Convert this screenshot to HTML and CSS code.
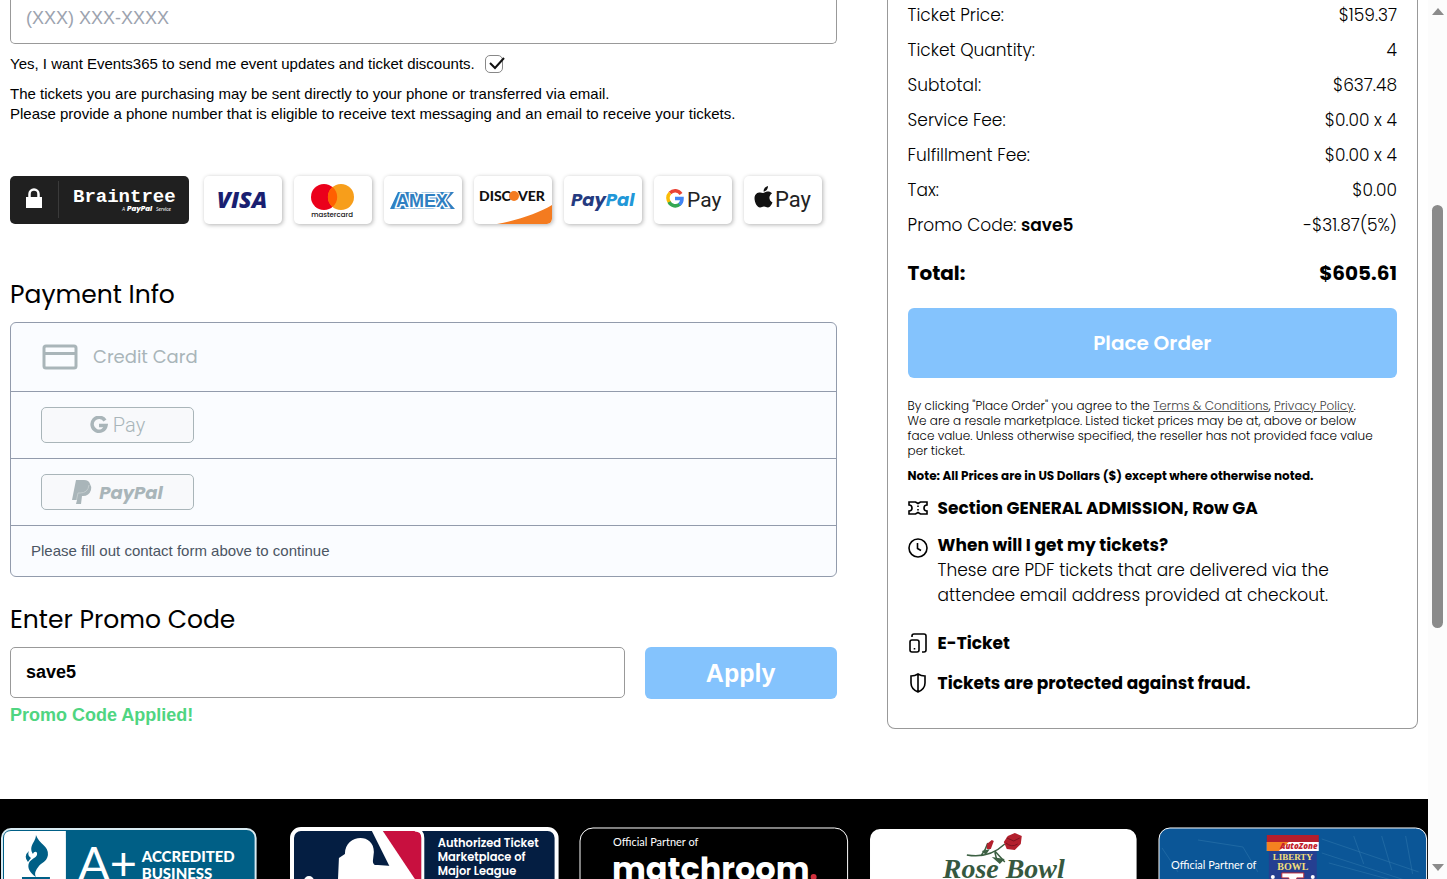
FILE: index.html
```html
<!DOCTYPE html>
<html lang="en">
  <head>
    <meta charset="utf-8">
    <meta name="viewport" content="width=device-width, initial-scale=1">
    <title>Checkout</title>
    <link rel="stylesheet" href="styles.css">
  </head>
  <body>
    <div class="page">
      <main class="checkout">
        <section class="details">
          <input class="input phone" type="tel" placeholder="(XXX) XXX-XXXX" aria-label="Phone number">
          <label class="optin">
            Yes, I want Events365 to send me event updates and ticket discounts.
            <span class="tick">
              <input type="checkbox" checked>
              <svg width="20" height="20" viewBox="0 0 20 20"><path d="M4 8l5 5 9-10" fill="none" stroke="#111" stroke-width="2"/></svg>
            </span>
          </label>
          <p class="notice">The tickets you are purchasing may be sent directly to your phone or transferred via email.<br>
          Please provide a phone number that is eligible to receive text messaging and an email to receive your tickets.</p>

          <div class="brands">
            <svg class="braintree" viewBox="0 0 179 48">
              <rect width="179" height="48" rx="5" fill="#202020"/>
              <rect x="16" y="21" width="16" height="11" fill="#fff"/>
              <path d="M19.5 22v-4a4.5 4.5 0 0 1 9 0v4" fill="none" stroke="#fff" stroke-width="2.5"/>
              <path d="M48.5 5v37" stroke="#3a3a3a"/>
              <text x="63" y="26" class="slab" font-size="19">Braintree</text>
              <text x="112" y="35" class="tiny" font-size="5">A</text>
              <text x="117" y="35" class="tiny bold" font-size="7">PayPal</text>
              <text x="146" y="35" class="tiny" font-size="5">Service</text>
            </svg>
            <svg class="brand" viewBox="0 0 78 48"><text x="38" y="32" text-anchor="middle" class="visa" font-size="23">VISA</text></svg>
            <svg class="brand" viewBox="0 0 78 48">
              <circle cx="30" cy="21" r="13" fill="#eb001b"/>
              <circle cx="47" cy="21" r="13" fill="#f79e1b"/>
              <path d="M38.5 11a13 13 0 0 1 0 20a13 13 0 0 1 0-20z" fill="#ff5f00"/>
              <text x="38" y="41" text-anchor="middle" class="mc" font-size="7">mastercard</text>
            </svg>
            <svg class="brand" viewBox="0 0 78 48">
              <path d="M6 33l8-17h18l3 3 3-3h32l-7 8 8 9H57l-3-3-3 3z" fill="#2f80c2"/>
              <text x="38" y="31" text-anchor="middle" class="amex" font-size="18">AMEX</text>
            </svg>
            <svg class="brand" viewBox="0 0 78 48">
              <path d="M23 48C45 44 65 37 78 29v14q0 5-5 5z" fill="#f47b20"/>
              <text x="5" y="25" class="disc" font-size="14">DISC</text>
              <text x="44" y="25" class="disc" font-size="14">VER</text>
              <circle cx="40" cy="20" r="5" fill="#f47b20"/>
            </svg>
            <svg class="brand" viewBox="0 0 78 48"><text x="7" y="30" class="pp" font-size="18"><tspan fill="#253b80">Pay</tspan><tspan fill="#2197d8">Pal</tspan></text></svg>
            <svg class="brand" viewBox="0 0 78 48">
              <g fill="none" stroke-width="3.5">
                <path d="M27 18a7 7 0 0 0-11-1" stroke="#ea4335"/>
                <path d="M16 17a7 7 0 0 0 0 10" stroke="#fbbc05"/>
                <path d="M15 26a7 7 0 0 0 11 2" stroke="#34a853"/>
                <path d="M25.5 28.5q2.5-2 2.5-6h-7" stroke="#4285f4"/>
              </g>
              <text x="33" y="31" class="pay" font-size="21">Pay</text>
            </svg>
            <svg class="brand" viewBox="0 0 78 48">
              <path d="M19 17c-3-1-8-1-8.500 5 0 5 3 9.500 5.500 9.500 2 0 2-1 4-1s2 1 4 1 3.500-3 4.500-5c-4-2-4-7-.5-9-2-3-6-2-7-1.300-.7.500-1.500.8-2 .8z" fill="#111"/>
              <path d="M19.500 15.500c0-3 2-5 4.500-5.500 0 3-2 5.500-4.500 5.500z" fill="#111"/>
              <text x="31" y="31" class="pay" font-size="22">Pay</text>
            </svg>
          </div>

          <h2>Payment Info</h2>
          <div class="methods">
            <div class="method first">
              <button class="credit" type="button" disabled>
                <svg width="36" height="26" viewBox="0 0 36 26"><g fill="none" stroke="#a9b5b9" stroke-width="3"><rect x="2" y="2" width="32" height="22" rx="2"/><path d="M2 9.500h32"/></g></svg>
                Credit Card
              </button>
            </div>
            <div class="method">
              <button class="wallet" type="button" disabled>
                <svg width="18" height="18" viewBox="0 0 18 18"><path d="M15 4.500A7 7 0 1 0 16 9.500H9" fill="none" stroke="#a9b5b9" stroke-width="3.500"/></svg>
                <span class="gpay">Pay</span>
              </button>
            </div>
            <div class="method">
              <button class="wallet wide" type="button" disabled>
                <svg width="20" height="26" viewBox="0 0 20 26"><path d="M4 1h8q5 0 6 4 2 3 1 6-2 6-8 6h-1l-1 8H4l1-4H0z" fill="#a9b5b9"/><path d="M17 6q-1 8-9 8H6l-1.500 7" fill="none" stroke="#c3ccce"/></svg>
                <span class="paypal">PayPal</span>
              </button>
            </div>
            <p class="fill">Please fill out contact form above to continue</p>
          </div>

          <h2><label for="promo">Enter Promo Code</label></h2>
          <div class="promo">
            <input class="input code" id="promo" type="text" value="save5">
            <button class="apply" type="button">Apply</button>
          </div>
          <p class="applied">Promo Code Applied!</p>
        </section>

        <aside class="summary">
          <dl class="prices">
            <div><dt>Ticket Price:</dt><dd>$159.37</dd></div>
            <div><dt>Ticket Quantity:</dt><dd>4</dd></div>
            <div><dt>Subtotal:</dt><dd>$637.48</dd></div>
            <div><dt>Service Fee:</dt><dd>$0.00 x 4</dd></div>
            <div><dt>Fulfillment Fee:</dt><dd>$0.00 x 4</dd></div>
            <div><dt>Tax:</dt><dd>$0.00</dd></div>
            <div><dt>Promo Code: <b>save5</b></dt><dd>-$31.87(5%)</dd></div>
            <div class="total"><dt>Total:</dt><dd>$605.61</dd></div>
          </dl>
          <button class="order" type="button">Place Order</button>
          <p class="terms">By clicking "Place Order" you agree to the <a href="#">Terms &amp; Conditions</a>, <a href="#">Privacy Policy</a>.<br>
          We are a resale marketplace. Listed ticket prices may be at, above or below<br>
          face value. Unless otherwise specified, the reseller has not provided face value<br>
          per ticket.</p>
          <p class="note">Note: All Prices are in US Dollars ($) except where otherwise noted.</p>
          <ul class="info">
            <li>
              <svg viewBox="0 0 20 20"><path d="M1 4h6.500L10 5.500 12.500 4H19v3q-3 0-3 3t3 3v3h-6.500L10 14.500 7.500 16H1v-3q3 0 3-3T1 7zM10 7.500v1.500M10 11v1.500"/></svg>
              <b>Section GENERAL ADMISSION, Row GA</b>
            </li>
            <li class="when">
              <svg viewBox="0 0 20 20"><circle cx="10" cy="10" r="9"/><path d="M9.500 5v5.500l3.500 2"/></svg>
              <div>
                <b>When will I get my tickets?</b>
                <p>These are PDF tickets that are delivered via the<br>attendee email address provided at checkout.</p>
              </div>
            </li>
            <li class="eticket">
              <svg viewBox="0 0 20 20"><rect x="2" y="7" width="9" height="12" rx="2"/><path d="M4 4V3q0-2 2-2h10q2 0 2 2v14q0 2-2 2h-2M6.500 15v1.500"/></svg>
              <b>E-Ticket</b>
            </li>
            <li class="fraud">
              <svg viewBox="0 0 20 20"><path d="M10 1q3 2 7 2v7q0 6-7 9-7-3-7-9V3q4 0 7-2zM10 1v18"/></svg>
              <b>Tickets are protected against fraud.</b>
            </li>
          </ul>
        </aside>
      </main>

      <footer class="partners">
        <svg viewBox="0 0 270 120">
          <rect x="2" y="2" width="254" height="116" rx="9" fill="#005f86" stroke="#d8eaf1" stroke-width="2"/>
          <path d="M66 4H11q-7 0-7 7v105h62z" fill="#fff"/>
          <path d="M36 8c3 9 13 11 12 20-1 7-7 8-9 11-3 4-5 7-3 11-6-4-9-9-7-14 2-4 7-5 8-8 1-4-3-4-4-1-5-8 3-12 3-19z" fill="#005f86"/>
          <path d="M29 24q-6 5-1 11l3-4q-4-2-2-7zM22 50h28v4h-9v20h-9V54H22z" fill="#005f86"/>
          <text x="78" y="53" class="light" font-size="47">A+</text>
          <text x="142" y="35" class="accredited" font-size="15">ACCREDITED</text>
          <text x="142" y="52" class="accredited" font-size="15">BUSINESS</text>
        </svg>
        <svg viewBox="0 0 270 120">
          <rect x="2" y="2" width="265" height="116" rx="9" fill="#041e42" stroke="#fff" stroke-width="4"/>
          <path d="M93 4h33q6 0 6 6v106h-5z" fill="#c8103f"/>
          <path d="M82 4h11l36 54v40z" fill="#fff"/>
          <path d="M125 3q8 0 8 8v107" fill="none" stroke="#fff" stroke-width="3"/>
          <path d="M49 31l6-4c0-20 29-22 29-2l-1 9q0 5 5 4l14 1 24 14v66H38q4-26 16-36l2-5q9-5 2-7-5 1-4-4l1-3-2-2 2-4-1-3q-6 1-6-1z" fill="#fff"/>
          <circle cx="19" cy="54" r="5" fill="#fff"/>
          <g class="mlb" font-size="11.5">
            <text x="148" y="20">Authorized Ticket</text>
            <text x="148" y="34">Marketplace of</text>
            <text x="148" y="48">Major League</text>
          </g>
        </svg>
        <svg viewBox="0 0 270 120">
          <rect x="1" y="1" width="268" height="118" rx="13" fill="#000" stroke="#fff"/>
          <text x="34" y="19" class="partner" font-size="11">Official Partner of</text>
          <text x="33" y="53" class="match" font-size="32">matchroom</text>
          <circle cx="235" cy="50" r="3" fill="#d32f3c"/>
        </svg>
        <svg viewBox="0 0 270 120">
          <rect x="1" y="2" width="267" height="117" rx="10" fill="#fff"/>
          <path d="M98 28q22 4 38-11M112 29q5-6 7-13M126 24l10 11M126 25l2 8" fill="none" stroke="#3c6043" stroke-width="1.5"/>
          <path d="M123 30l13 2-5 5zM113 24l8-2-4 6z" fill="#3c6043"/>
          <path d="M139 9l7-3 7 3-1 8-6 6-8-1-3-7zM118 17l5-4 2 1-3 8h-4z" fill="#b3202d"/>
          <path d="M138 11l7 3 6-3M137 16q6 5 12 1" fill="none" stroke="#7d1420"/>
          <text x="135" y="51" text-anchor="middle" class="rose" font-size="28">Rose Bowl</text>
        </svg>
        <svg viewBox="0 0 270 120">
          <rect x="1" y="1" width="268" height="118" rx="11" fill="#0b5697" stroke="#fff"/>
          <path d="M4 21l16 24M40 13l45 7 15 25M164 12l97 33M164 26l92 30M171 36l85 23M196 9l10 28M224 9l10 34M248 9l7 38" fill="none" stroke="#337aae" opacity=".5"/>
          <text x="13" y="42" class="partner" font-size="11">Official Partner of</text>
          <path d="M109 8h52v9l-2 8v85h-48V25l-2-8z" fill="#253f91"/>
          <path d="M109 8h52v8h-52z" fill="#b51e2c"/>
          <path d="M109 15h52v9h-52z" fill="#fff"/>
          <path d="M109 15h22l-10 9h-12z" fill="#f58220"/>
          <text x="141" y="22" text-anchor="middle" class="auto" font-size="8">AutoZone</text>
          <text x="135" y="33" text-anchor="middle" class="liberty" font-size="9">LIBERTY</text>
          <text x="135" y="43" text-anchor="middle" class="liberty" font-size="10">BOWL</text>
          <path d="M124 46h22v5h-7v10h-8V51h-7z" fill="#fff" stroke="#bd2a36"/>
          <circle cx="115" cy="50" r="2" fill="#fff"/><circle cx="155" cy="50" r="2" fill="#fff"/>
        </svg>
      </footer>
    </div>

    <div class="scroll" aria-hidden="true">
      <span class="up"></span>
      <span class="thumb"></span>
      <span class="down"></span>
    </div>
  </body>
</html>
```
FILE: styles.css
```css
*{
  box-sizing: border-box;
}
body{
  display: flex;
  margin: 0;
  height: 100vh;
  overflow: hidden;
  background: #fff;
  color: #000;
  font-family: Poppins, Inter, sans-serif;
}
p, dl, dd, ul, h2{
  margin: 0;
  padding: 0;
}
button, input{
  font-family: inherit;
}
.page{
  flex: 1;
  min-width: 0;
}
.checkout{
  display: grid;
  grid-template-columns: minmax(0, 14fr) minmax(0, 9fr);
  align-items: start;
  gap: 50px;
  padding: 0 10px;
}

/* left column */
.details{
  font-family: "Liberation Sans", Arial, sans-serif;
}
.input{
  display: block;
  width: 100%;
  padding: 0 15px;
  border: 1px solid #999;
  border-radius: 5px;
  background: #fff;
  font-size: 18px;
}
.phone{
  height: 44px;
  padding-bottom: 6px;
  border-top: 0;
  border-radius: 0 0 5px 5px;
}
.phone::placeholder{
  color: #9ca3af;
}
.optin{
  display: flex;
  align-items: center;
  gap: 10px;
  height: 39px;
  font-size: 15px;
}
.tick{
  position: relative;
  height: 18px;
}
.tick input{
  display: block;
  width: 18px;
  height: 18px;
  margin: 0;
  border: 1px solid #888;
  border-radius: 5px;
  appearance: none;
}
.tick svg{
  position: absolute;
  top: 0;
  left: 1px;
}
.notice{
  padding-top: 1px;
  font-size: 15px;
  line-height: 20px;
}
.brands{
  display: flex;
  gap: 12px;
  margin: 52px 0 53px;
}
.brands svg{
  flex: none;
  height: 48px;
}
.braintree{
  width: 179px;
  margin-right: 3px;
}
.brand{
  width: 78px;
  border-radius: 5px;
  background: #fff;
  box-shadow: 1px 1px 4px rgba(0, 0, 0, .3);
}
.slab{
  fill: #fff;
  font-family: "Liberation Mono", monospace;
  font-weight: bold;
}
.tiny{
  fill: #fff;
  font-family: Lato, sans-serif;
  font-style: italic;
}
.bold{
  font-family: Poppins, sans-serif;
  font-weight: 800;
}
.visa{
  fill: #1a1f71;
  font-family: "Open Sans", sans-serif;
  font-style: italic;
  font-weight: 800;
}
.mc{
  fill: #111;
  font-family: Poppins, sans-serif;
  font-weight: 500;
}
.amex{
  fill: #2f80c2;
  stroke: #fff;
  stroke-width: 3px;
  paint-order: stroke;
  font-family: "Liberation Sans", Arial, sans-serif;
  font-weight: bold;
}
.disc{
  fill: #111;
  font-family: Lato, sans-serif;
  font-weight: 900;
}
.pp{
  font-family: Poppins, Lato, sans-serif;
  font-style: italic;
  font-weight: 700;
}
.pay{
  fill: #222;
  font-family: Roboto, sans-serif;
}
h2{
  font-family: Poppins, Inter, sans-serif;
  font-size: 25px;
  font-weight: 400;
  line-height: 36px;
}
.methods{
  margin: 9px 0 25px;
  border: 1px solid #929bac;
  border-radius: 6px;
  background: #fafcff;
}
.method{
  display: flex;
  align-items: center;
  height: 67px;
  padding: 0 30px;
  border-bottom: 1px solid #929bac;
}
.first{
  height: 69px;
}
.credit{
  display: flex;
  align-items: center;
  gap: 15px;
  padding: 0 0 0 1px;
  border: 0;
  background: none;
  color: #a9b5b9;
  font-family: Poppins, Inter, sans-serif;
  font-size: 18px;
  line-height: 26px;
}
.wallet{
  display: flex;
  align-items: center;
  justify-content: center;
  gap: 5px;
  width: 153px;
  height: 36px;
  padding: 0;
  border: 1px solid #a9b5b9;
  border-radius: 5px;
  background: #f8f9fb;
  color: #a9b5b9;
}
.wide{
  gap: 7px;
}
.gpay{
  font-family: Roboto, sans-serif;
  font-size: 20px;
  font-weight: 300;
}
.paypal{
  font-family: Poppins, Lato, sans-serif;
  font-size: 18px;
  font-style: italic;
  font-weight: 700;
}
.fill{
  padding: 15px 20px;
  color: #4b5563;
  font-size: 15px;
  line-height: 20px;
}
.promo{
  display: flex;
  gap: 20px;
  margin-top: 9px;
}
.code{
  flex: 1;
  height: 51px;
  min-width: 0;
  font-weight: bold;
}
.apply{
  width: 192px;
  height: 52px;
  border: 0;
  border-radius: 6px;
  background: #84c3fd;
  color: #fff;
  font-size: 25px;
  font-weight: bold;
}
.applied{
  padding-top: 6px;
  color: #4fd581;
  font-size: 18px;
  font-weight: bold;
  line-height: 20px;
}

/* order summary */
.summary{
  padding: 0 20px 32px;
  border: 1px solid #999;
  border-top: 0;
  border-radius: 0 0 8px 8px;
}
.prices{
  font-size: 17px;
  font-weight: 300;
}
.prices div{
  display: flex;
  justify-content: space-between;
  line-height: 30px;
  padding-bottom: 5px;
}
.prices b{
  font-weight: 600;
}
.prices .total{
  padding: 13px 0 20px;
  font-size: 20px;
  font-weight: 700;
}
.order{
  display: block;
  width: 100%;
  height: 70px;
  border: 0;
  border-radius: 6px;
  background: #84c3fd;
  color: #fff;
  font-size: 20px;
  font-weight: 600;
}
.terms{
  margin-top: 20px;
  font-size: 12px;
  font-weight: 300;
  line-height: 15px;
}
.terms a{
  color: #444;
}
.note{
  margin-top: 10px;
  font-size: 12px;
  font-weight: 700;
  line-height: 15px;
}
.info{
  margin-top: 13px;
  list-style: none;
  font-size: 17px;
  line-height: 25px;
}
.info li{
  display: flex;
  gap: 10px;
}
.info b{
  font-weight: 700;
}
.info svg{
  flex: none;
  width: 20px;
  height: 20px;
  margin-top: 2px;
  fill: none;
  stroke: #000;
  stroke-width: 1.6;
}
.info p{
  font-weight: 300;
}
.info .when{
  margin-top: 12px;
}
.info .when svg{
  margin-top: 5px;
}
.info .eticket{
  margin-top: 23px;
}
.info .fraud{
  margin-top: 15px;
}

/* partner logos */
.partners{
  display: grid;
  grid-template-columns: repeat(5, minmax(0, 1fr));
  gap: 20px;
  margin-top: 70px;
  padding: 28px 0;
  background: #000;
}
.partners svg{
  display: block;
  width: 100%;
}
.light{
  fill: #fff;
  font-family: Lato, sans-serif;
}
.accredited{
  fill: #fff;
  font-family: Lato, sans-serif;
  font-weight: 900;
}
.mlb{
  fill: #fff;
  font-family: Poppins, Inter, sans-serif;
  font-weight: 600;
}
.partner{
  fill: #fff;
  font-family: Lato, sans-serif;
}
.match{
  fill: #fff;
  font-family: Poppins, Inter, sans-serif;
  font-weight: 700;
}
.rose{
  fill: #36583f;
  font-family: "Liberation Serif", serif;
  font-style: italic;
  font-weight: bold;
}
.auto{
  fill: #c41f2e;
  font-family: "Open Sans", sans-serif;
  font-style: italic;
  font-weight: 800;
}
.liberty{
  fill: #f2df79;
  font-family: "Liberation Serif", serif;
  font-weight: bold;
}

/* scroll bar */
.scroll{
  display: flex;
  flex-direction: column;
  align-items: center;
  width: 19px;
  padding: 8px 0;
  background: #fcfcfc;
}
.up, .down{
  border: 6px solid transparent;
}
.up{
  border-top: 0;
  border-bottom: 7px solid #8b8b8b;
}
.down{
  margin-top: auto;
  border-top: 7px solid #8b8b8b;
  border-bottom: 0;
}
.thumb{
  width: 11px;
  height: 49%;
  margin-top: 190px;
  border-radius: 6px;
  background: #8b8b8b;
}
```
